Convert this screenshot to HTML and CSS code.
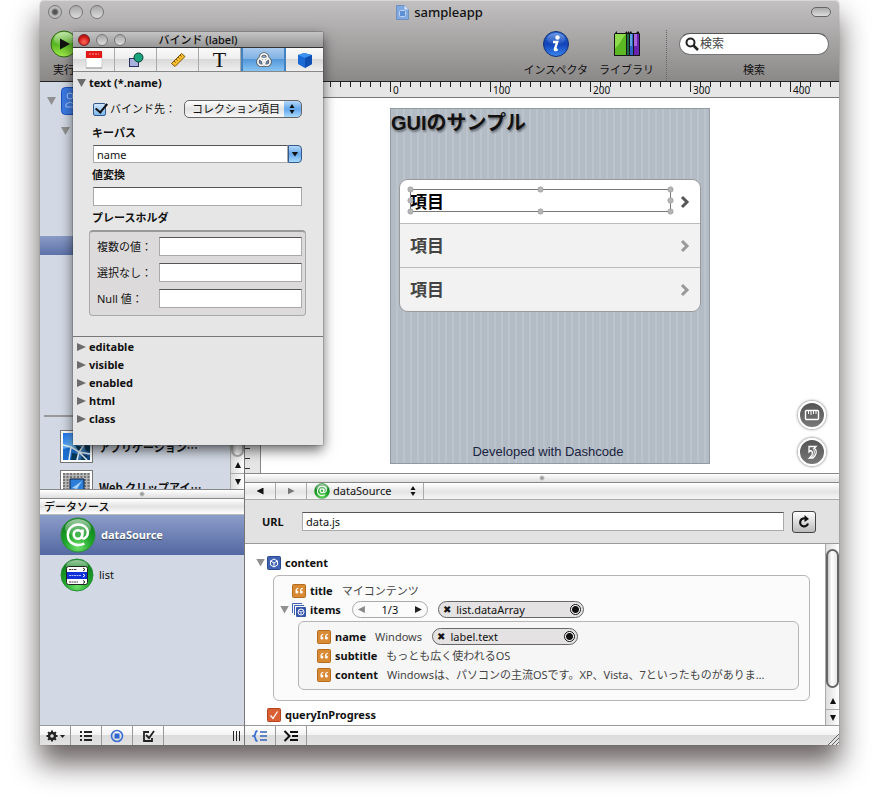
FILE: index.html
```html
<!DOCTYPE html>
<html lang="ja">
	<head>
		<meta charset="UTF-8">
		<title>sampleapp</title>
		<link rel="stylesheet" href="styles.css">
	</head>
	<body>
		<svg class="defs" aria-hidden="true">
			<defs>
				<radialGradient id="green" cx="50%" cy="85%" r="80%">
					<stop offset="0" stop-color="#6fe06a"/>
					<stop offset=".5" stop-color="#1fa52b"/>
					<stop offset="1" stop-color="#0d7a1c"/>
				</radialGradient>
				<linearGradient id="gloss" x1="0" y1="0" x2="0" y2="1">
					<stop offset="0" stop-color="#fff" stop-opacity=".6"/>
					<stop offset="1" stop-color="#fff" stop-opacity=".05"/>
				</linearGradient>
				<linearGradient id="run" x1="0" y1="0" x2="0" y2="1">
					<stop offset="0" stop-color="#6cc534"/>
					<stop offset=".5" stop-color="#57b520"/>
					<stop offset="1" stop-color="#a4f04e"/>
				</linearGradient>
				<linearGradient id="bluefill" x1="0" y1="0" x2="0" y2="1">
					<stop offset="0" stop-color="#2f6fd8"/>
					<stop offset=".5" stop-color="#1143b8"/>
					<stop offset="1" stop-color="#3a86f0"/>
				</linearGradient>
				<linearGradient id="water" x1="0" y1="0" x2="1" y2="1">
					<stop offset="0" stop-color="#1a70f0"/>
					<stop offset=".4" stop-color="#6fc0fa"/>
					<stop offset="1" stop-color="#063a80"/>
				</linearGradient>
			</defs>
			<symbol id="quote" viewBox="0 0 14 14">
				<rect x=".5" y=".5" width="13" height="13" rx="1" fill="#d98a35" stroke="#b56c1c"/>
				<path d="M6.3 4.2C4.6 4.7 3.9 5.8 4 7" fill="none" stroke="#fff" stroke-width="1.1"/>
				<path d="M10.8 4.2C9.1 4.7 8.4 5.8 8.5 7" fill="none" stroke="#fff" stroke-width="1.1"/>
				<circle cx="4.9" cy="8" r="1.5" fill="#fff"/>
				<circle cx="9.4" cy="8" r="1.5" fill="#fff"/>
			</symbol>
			<symbol id="at" viewBox="0 0 36 36">
				<circle cx="18" cy="18" r="17" fill="url(#green)" stroke="#2b8f37"/>
				<ellipse cx="18" cy="11" rx="13" ry="9" fill="url(#gloss)"/>
				<circle cx="18" cy="17.500" r="4.300" fill="none" stroke="#fff" stroke-width="2.600"/>
				<path d="M22.800 12.500l-1 7.500c0 3 6 1.500 6-4.500 0-5-4.500-8-9.500-8-6 0-10.500 4.500-10.500 10.500s4.500 10 10.500 10c2.500 0 4.500-.5 6-1.500" fill="none" stroke="#fff" stroke-width="2.400"/>
			</symbol>
			<symbol id="cube" viewBox="0 0 14 14">
				<rect x=".5" y=".5" width="13" height="13" rx="1" fill="#3f62b4" stroke="#2a478f"/>
				<path d="M7 3l3.500 2v4L7 11 3.500 9V5zM3.500 5L7 7l3.500-2M7 7v4" fill="none" stroke="#fff"/>
			</symbol>
		</svg>

		<div class="app">
			<header class="chrome">
				<div class="titlebar">
					<div class="lights">
						<button class="light light--dot" aria-label="close"></button>
						<button class="light" aria-label="minimize"></button>
						<button class="light" aria-label="zoom"></button>
					</div>
					<h1 class="app-title">
						<svg width="13" height="16" viewBox="0 0 13 16"><path d="M.5 1.500h8l4 4v10H.5z" fill="#7fa9e0" stroke="#6f8fbd"/><path d="M8.500 1.500v4h4z" fill="#dbe8fa"/><rect x="3.500" y="6.500" width="6" height="6" rx="1" fill="#5d8fd4" stroke="#bcd5f5"/></svg>
						sampleapp
					</h1>
					<button class="pill-button" aria-label="toolbar"></button>
				</div>
				<div class="toolbar">
					<button class="tool tool--run">
						<svg width="28" height="28" viewBox="0 0 28 28"><circle cx="14" cy="14" r="13" fill="url(#run)" stroke="#33671a"/><ellipse cx="14" cy="9" rx="10" ry="7" fill="url(#gloss)"/><path d="M10 8.500l10 5.500-10 5.500z" fill="#111"/></svg>
						<span>実行</span>
					</button>
					<button class="tool tool--inspector">
						<svg width="28" height="28" viewBox="0 0 28 28"><circle cx="14" cy="14" r="12.500" fill="url(#bluefill)" stroke="#143070"/><ellipse cx="14" cy="9" rx="9" ry="6" fill="url(#gloss)" opacity=".5"/><circle cx="15.500" cy="7.500" r="2.200" fill="#fff"/><path d="M11 12h4.200l-2.400 7.500c0 1 1.200.8 2.700-.5" fill="none" stroke="#fff" stroke-width="2.400"/></svg>
						<span>インスペクタ</span>
					</button>
					<button class="tool tool--library">
						<svg width="28" height="28" viewBox="0 0 28 28"><path d="M1 4l3-3v2h8l2-2v2l2-2v2l2-2 1 2h4l2-2 2 3v22H1z" fill="#151515"/><path d="M2 4h11v21H2z" fill="#5cb823"/><path d="M2 4h11C8 9 8 14 2 18z" fill="#8edb4e"/><path d="M14 4h2v21h-2z" fill="#1f6a4c"/><path d="M17 4h3v21h-3z" fill="#2f62c8"/><path d="M17 4h2v12h-2z" fill="#62a5dd"/><path d="M21 4h5v21h-5z" fill="#6a22b0"/><path d="M21 4h3v12h-3z" fill="#a866dc"/></svg>
						<span>ライブラリ</span>
					</button>
					<div class="search">
						<div class="search-box">
							<svg width="14" height="14" viewBox="0 0 14 14"><circle cx="5.500" cy="5.500" r="4" fill="none" stroke="#222" stroke-width="2"/><path d="M8.500 8.500l4.500 4.500" stroke="#222" stroke-width="2.600"/></svg>
							<input id="search" type="search" placeholder="検索">
						</div>
						<label for="search">検索</label>
					</div>
				</div>
			</header>

			<div class="columns">
				<aside class="sidebar">
					<div class="tree">
						<div class="tree-list">
							<div class="tree-row">
								<i class="tri tri--gray"></i>
								<svg width="28" height="28" viewBox="0 0 28 28"><rect x=".5" y=".5" width="27" height="27" rx="4" fill="#3c7be4" stroke="#1b4fc0"/><circle cx="9" cy="9" r="3" fill="none" stroke="#a8c9ff"/><path d="M5 20h8v-3l-4-2-4 2z" fill="none" stroke="#a8c9ff"/></svg>
							</div>
							<div class="tree-row tree-row--child"><i class="tri tri--gray"></i></div>
							<div class="tree-selected"></div>
							<hr class="tree-line">
							<div class="asset">
								<svg width="33" height="33" viewBox="0 0 33 33"><rect x=".5" y=".5" width="32" height="32" fill="#fff" stroke="#777"/><path d="M3 3h27v27H3z" fill="url(#water)"/><path d="M3 19l8-2 6 4-3 9H3z" fill="#1c6fd0"/><path d="M15 15l7 2-3 5zM24 15l6 1v6l-4-1zM12 23l6 1-2 6h-5zM22 24l6 2-3 4h-4z" fill="#093b5c"/><path d="M3 15l8 2 8 5 11 2M11 17l-2 13M19 22l-2 8M19 22l5-7M19 22l8 8" fill="none" stroke="#e8f3fa" stroke-width="1.500"/></svg>
								<span>アプリケーション…</span>
							</div>
							<div class="asset">
								<svg width="33" height="33" viewBox="0 0 33 33"><rect x=".5" y=".5" width="32" height="32" fill="#fff" stroke="#777"/><path d="M3 3h27v27H3z" fill="#b8b8b8"/><path d="M3 4h27M3 7h27M3 10h27M3 13h27M3 16h27M3 19h27" stroke="#333" stroke-dasharray="2 1.500"/><path d="M10 9h14v21H10z" fill="#2c7ed8" stroke="#124"/><path d="M12 18l10-7-5 8z" fill="#a5d0fa"/></svg>
								<span>Web クリップアイ…</span>
							</div>
						</div>
						<div class="scroll scroll--small"><i class="thumb"></i><i class="up"></i><i class="down"></i></div>
					</div>
					<div class="splitter"></div>
					<h2 class="source-head">データソース</h2>
					<ul class="sources">
						<li class="source source--on"><svg width="36" height="36"><use href="#at"/></svg>dataSource</li>
						<li class="source">
							<svg width="34" height="36" viewBox="0 0 34 36"><circle cx="17" cy="18" r="16" fill="url(#green)" stroke="#2b8f37"/><ellipse cx="17" cy="9" rx="11" ry="6" fill="url(#gloss)"/><rect x="6.500" y="9.500" width="21" height="18" rx="2" fill="#fff" stroke="#222"/><path d="M7 15h20v7H7z" fill="#1230d8"/><path d="M9 12.500h8M9 25h9" stroke="#444" stroke-dasharray="2 .5"/><path d="M9 18.500h12" stroke="#aabaff" stroke-dasharray="2 .5"/><path d="M23 11l2 1.500-2 1.500M23 23.500l2 1.500-2 1.500" fill="none" stroke="#222"/><path d="M23 17l2 1.500-2 1.500" fill="none" stroke="#fff"/></svg>
							list
						</li>
					</ul>
					<div class="bottombar">
						<button aria-label="action"><svg width="20" height="14" viewBox="0 0 20 14"><circle cx="7" cy="7" r="3" fill="none" stroke="#222" stroke-width="2.400"/><path d="M7 1.500v2M7 10.500v2M1.500 7h2M10.500 7h2M3.100 3.100l1.400 1.400M9.500 9.500l1.400 1.400M10.900 3.100L9.500 4.500M4.500 9.500l-1.400 1.400" stroke="#222" stroke-width="2"/><path d="M15 6h5l-2.500 3z" fill="#222"/></svg></button>
						<button aria-label="outline"><svg width="14" height="14" viewBox="0 0 14 14"><path d="M1 3h2M1 7h2M1 11h2M5 3h8M5 7h8M5 11h8" stroke="#222" stroke-width="2"/></svg></button>
						<button aria-label="data source"><svg width="14" height="14" viewBox="0 0 14 14"><circle cx="7" cy="7" r="5.500" fill="none" stroke="#3b6fd2" stroke-width="1.600"/><rect x="4.500" y="4.500" width="5" height="5" fill="#2f66d0"/></svg></button>
						<button aria-label="steps"><svg width="14" height="14" viewBox="0 0 14 14"><path d="M8 3H3v9h8V9" fill="none" stroke="#222" stroke-width="1.800"/><path d="M5 6l3 3 5-7" fill="none" stroke="#222" stroke-width="1.800"/></svg></button>
						<svg class="grip" width="8" height="10" viewBox="0 0 8 10"><path d="M.5 0v10M3.500 0v10M6.500 0v10" stroke="#222"/></svg>
					</div>
				</aside>

				<main class="editor">
					<div class="ruler">
						<span class="ruler-lead"></span>
						<span class="ruler-mark">0</span>
						<span class="ruler-mark">100</span>
						<span class="ruler-mark">200</span>
						<span class="ruler-mark">300</span>
						<span class="ruler-mark">400</span>
					</div>
					<div class="stage">
						<div class="side-ruler"></div>
						<div class="canvas">
							<div class="phone">
								<h2 class="phone-title">GUIのサンプル</h2>
								<ul class="items">
									<li class="item item--first">項目
										<svg width="10" height="14" viewBox="0 0 10 14"><path d="M2 2l5 5-5 5" fill="none" stroke="currentColor" stroke-width="3"/></svg>
										<svg class="selection" width="270" height="32" viewBox="0 0 270 32"><rect x="4.500" y="4.500" width="260" height="22" fill="none" stroke="#777"/><g fill="#b5b5b5" stroke="#8f8f8f" stroke-width=".5"><circle cx="4.500" cy="4.500" r="2.700"/><circle cx="134.500" cy="4.500" r="2.700"/><circle cx="264.500" cy="4.500" r="2.700"/><circle cx="4.500" cy="15.500" r="2.700"/><circle cx="264.500" cy="15.500" r="2.700"/><circle cx="4.500" cy="26.500" r="2.700"/><circle cx="134.500" cy="26.500" r="2.700"/><circle cx="264.500" cy="26.500" r="2.700"/></g></svg>
									</li>
									<li class="item">項目 <svg width="10" height="14" viewBox="0 0 10 14"><path d="M2 2l5 5-5 5" fill="none" stroke="currentColor" stroke-width="3"/></svg></li>
									<li class="item">項目 <svg width="10" height="14" viewBox="0 0 10 14"><path d="M2 2l5 5-5 5" fill="none" stroke="currentColor" stroke-width="3"/></svg></li>
								</ul>
								<p class="credit">Developed with Dashcode</p>
							</div>
							<div class="rounds">
								<button class="round" aria-label="ruler"><svg width="16" height="16" viewBox="0 0 16 16"><rect x="1.500" y="3.500" width="13" height="9" rx="1" fill="none" stroke="#fff" stroke-width="1.400"/><path d="M4.500 4v3M7 4v4M9.500 4v3M12 4v3" stroke="#fff"/></svg></button>
								<button class="round" aria-label="rotate"><svg width="16" height="16" viewBox="0 0 16 16"><path d="M5 2.500h7l-1.500 1.500c3 3 2 7-1.500 10H5.500c4-3 3.500-7 1-7.500L5 8z" fill="none" stroke="#fff" stroke-width="1.300"/><path d="M9 4c2.500 4 1 7-1.500 10" fill="none" stroke="#fff"/></svg></button>
							</div>
						</div>
					</div>
					<div class="splitter"></div>
					<nav class="navbar">
						<button class="nav-cell" aria-label="back"><i class="arrow arrow--left"></i></button>
						<button class="nav-cell" aria-label="forward"><i class="arrow arrow--right"></i></button>
						<div class="nav-select">
							<svg width="16" height="16"><use href="#at"/></svg>
							<select aria-label="data source"><option>dataSource</option></select>
							<svg class="updown" width="6" height="10" viewBox="0 0 6 10"><path d="M.5 4L3 0l2.500 4zM.5 6L3 10l2.500-4z" fill="#111"/></svg>
						</div>
					</nav>
					<div class="urlbar">
						<label for="url">URL</label>
						<input id="url" class="field" type="text" value="data.js">
						<button class="reload" aria-label="reload"><svg width="14" height="14" viewBox="0 0 14 14"><path d="M8 3.500a4 4 0 1 0 3 5" fill="none" stroke="#111" stroke-width="2.200"/><path d="M7.500 0v7L12 4z" fill="#111"/></svg></button>
					</div>
					<div class="data">
						<div class="data-tree">
							<div class="data-row data-row--top">
								<i class="tri tri--gray"></i>
								<svg width="14" height="14"><use href="#cube"/></svg>
								<b>content</b>
							</div>
							<div class="box">
								<div class="data-row data-row--box">
									<svg width="14" height="14"><use href="#quote"/></svg>
									<b>title</b><span>マイコンテンツ</span>
								</div>
								<div class="data-row data-row--items">
									<i class="tri tri--gray"></i>
									<svg width="14" height="14" viewBox="0 0 14 14"><path d="M.5 10V.5H10M2.500 12V2.500H12" fill="none" stroke="#3f62b4"/><rect x="4" y="4" width="10" height="10" rx="1" fill="#3557a8"/><circle cx="9" cy="9" r="3" fill="none" stroke="#fff"/><path d="M7 8l2 1 2-1M9 9v2" fill="none" stroke="#fff" stroke-width=".8"/></svg>
									<b>items</b>
									<div class="stepper">
										<button aria-label="previous"><i class="arrow arrow--left arrow--dim"></i></button>
										1/3
										<button aria-label="next"><i class="arrow arrow--right arrow--dark"></i></button>
									</div>
									<div class="binding"><button aria-label="remove">✖</button>list.dataArray<i class="socket"></i></div>
								</div>
								<div class="box box--inner">
									<div class="data-row">
										<svg width="14" height="14"><use href="#quote"/></svg>
										<b>name</b><span>Windows</span>
										<div class="binding"><button aria-label="remove">✖</button>label.text<i class="socket"></i></div>
									</div>
									<div class="data-row">
										<svg width="14" height="14"><use href="#quote"/></svg>
										<b>subtitle</b><span>もっとも広く使われるOS</span>
									</div>
									<div class="data-row">
										<svg width="14" height="14"><use href="#quote"/></svg>
										<b>content</b><span>Windowsは、パソコンの主流OSです。XP、Vista、7といったものがありま…</span>
									</div>
								</div>
							</div>
							<div class="data-row data-row--query">
								<svg width="14" height="14" viewBox="0 0 14 14"><rect x=".5" y=".5" width="13" height="13" rx="1" fill="#db5f35" stroke="#b3441d"/><path d="M3.500 7.500l2.500 3 4.500-7" fill="none" stroke="#fff" stroke-width="1.300"/></svg>
								<b>queryInProgress</b>
							</div>
						</div>
						<div class="scroll"><i class="thumb"></i><i class="up"></i><i class="down"></i></div>
					</div>
					<div class="bottombar">
						<button aria-label="data outline"><svg width="16" height="14" viewBox="0 0 16 14"><path d="M5.500 2C2 2 5 6 1.500 7 5 8 2 12 5.500 12" fill="none" stroke="#3b6fd2" stroke-width="1.800"/><path d="M8 3h7M8 7h7M8 11h7" stroke="#3464b8" stroke-width="1.600"/></svg></button>
						<button aria-label="source code"><svg width="16" height="14" viewBox="0 0 16 14"><path d="M1.500 2l5 5-5 5" fill="none" stroke="#111" stroke-width="2"/><path d="M7 3h8M9 7h6M7 11h8" stroke="#111" stroke-width="2"/></svg></button>
						<svg class="resize" width="12" height="12" viewBox="0 0 12 12"><path d="M1 12L12 1M5 12l7-7M9 12l3-3" stroke="#666"/></svg>
					</div>
				</main>
			</div>
		</div>

		<section class="panel">
			<header class="panel-title">
				<div class="lights lights--small">
					<button class="light light--red" aria-label="close"></button>
					<button class="light" aria-label="minimize"></button>
					<button class="light" aria-label="zoom"></button>
				</div>
				<h2>バインド (label)</h2>
			</header>
			<div class="tabs">
				<button class="tab" aria-label="attributes"><svg width="18" height="18" viewBox="0 0 18 18"><path d="M1 1h16v16H1z" fill="#fff" stroke="#ccc"/><path d="M1 0h16v7H1z" fill="#e31818"/><path d="M4 3h10" stroke="#ff9b9b" stroke-dasharray="2 1"/><path d="M1 17h16" stroke="#999"/></svg></button>
				<button class="tab" aria-label="fill and stroke"><svg width="16" height="16" viewBox="0 0 16 16"><rect x="1.500" y="6.500" width="9" height="8" fill="#a9b2dc" stroke="#2b3260"/><circle cx="10.500" cy="5.500" r="4.500" fill="#18a47d" stroke="#0a4030"/></svg></button>
				<button class="tab" aria-label="metrics"><svg width="16" height="16" viewBox="0 0 16 16"><path d="M1.500 11.500l10-10 3.500 3-10 10z" fill="#f4bd2c" stroke="#805608"/><path d="M4 9l1.500 1.500M6 7l1.500 1.500M8 5l1.500 1.500M10 3l1.500 1.500" stroke="#7c5208"/></svg></button>
				<button class="tab tab--text" aria-label="text">T</button>
				<button class="tab tab--on" aria-label="bindings"><svg width="16" height="16" viewBox="0 0 16 16"><g fill="none" stroke="#555" stroke-width="3.400"><circle cx="8" cy="5.500" r="3.600"/><circle cx="5.500" cy="9.800" r="3.600"/><circle cx="10.500" cy="9.800" r="3.600"/></g><g fill="none" stroke="#f4f4f4" stroke-width="1.800"><circle cx="8" cy="5.500" r="3.600"/><circle cx="5.500" cy="9.800" r="3.600"/><circle cx="10.500" cy="9.800" r="3.600"/></g></svg></button>
				<button class="tab" aria-label="behaviors"><svg width="16" height="18" viewBox="0 0 16 18"><path d="M1 4l6-2 8 2v9l-7 4-7-4z" fill="#1a69d4"/><path d="M1 4l7 3 7-3-8-2z" fill="#3b93ee"/><path d="M8 7l7-3v9l-7 4z" fill="#0f4fb4"/></svg></button>
			</div>
			<div class="panel-body">
				<h3 class="disclosure"><i class="tri"></i>text (*.name)</h3>
				<div class="form">
					<div class="bind-row">
						<input id="bind" class="check" type="checkbox" checked>
						<label for="bind">バインド先：</label>
						<div class="popup">
							<select aria-label="バインド先"><option>コレクション項目</option></select>
							<svg class="updown" width="6" height="10" viewBox="0 0 6 10"><path d="M.5 4L3 0l2.500 4zM.5 6L3 10l2.500-4z" fill="#111"/></svg>
						</div>
					</div>
					<label class="caption" for="keypath">キーパス</label>
					<div class="combo">
						<input id="keypath" class="field" type="text" value="name">
						<button aria-label="open"><i class="arrow arrow--down"></i></button>
					</div>
					<label class="caption" for="transform">値変換</label>
					<input id="transform" class="field" type="text">
					<div class="caption">プレースホルダ</div>
					<div class="group">
						<label for="many">複数の値：</label><input id="many" class="field" type="text">
						<label for="none">選択なし：</label><input id="none" class="field" type="text">
						<label for="null">Null 値：</label><input id="null" class="field" type="text">
					</div>
				</div>
				<div class="closed">
					<h3 class="disclosure"><i class="tri tri--shut"></i>editable</h3>
					<h3 class="disclosure"><i class="tri tri--shut"></i>visible</h3>
					<h3 class="disclosure"><i class="tri tri--shut"></i>enabled</h3>
					<h3 class="disclosure"><i class="tri tri--shut"></i>html</h3>
					<h3 class="disclosure"><i class="tri tri--shut"></i>class</h3>
				</div>
			</div>
		</section>
	</body>
</html>
```
FILE: styles.css
```css
* {
	box-sizing: border-box;
}
body {
	margin: 0;
	padding: 0 40px 55px 40px;
	min-height: 100vh;
	display: flex;
	position: relative;
	background: #fff;
	color: #111;
	font: 11px/16px "Noto Sans", "Noto Sans CJK JP", sans-serif;
}
h1, h2, h3, p, ul {
	margin: 0;
	padding: 0;
	font-size: 11px;
	list-style: none;
}
button, input, select {
	margin: 0;
	padding: 0;
	border: 0;
	background: none;
	color: inherit;
	font: inherit;
	appearance: none;
	outline: 0;
}
button {
	display: flex;
	align-items: center;
	justify-content: center;
}
svg {
	display: block;
	flex: none;
}
.defs {
	position: absolute;
	width: 0;
	height: 0;
}

/* main window */
.app {
	flex: 1;
	min-width: 0;
	display: flex;
	flex-direction: column;
	border-radius: 5px 5px 0 0;
	box-shadow: 0 0 1px #444, 0 18px 28px 1px rgba(30, 20, 20, .66);
}
.chrome {
	height: 82px;
	border-top: 1px solid #d8d8d8;
	border-bottom: 1px solid #222;
	border-radius: 5px 5px 0 0;
	background: linear-gradient(#c2c0c0, #8b8888);
}
.titlebar {
	height: 22px;
	padding: 0 8px;
	display: grid;
	grid-template-columns: 1fr auto 1fr;
	align-items: center;
}
.lights {
	display: flex;
	gap: 7px;
}
.light {
	width: 14px;
	height: 14px;
	border: 1px solid #777;
	border-radius: 50%;
	background: linear-gradient(#a6a6a6, #dcdcdc);
}
.light--dot {
	background: radial-gradient(circle, #555 0 2px, #bbb 4px);
}
.app-title {
	display: flex;
	align-items: center;
	gap: 5px;
	font-size: 13px;
	font-weight: 500;
}
.pill-button {
	justify-self: end;
	width: 20px;
	height: 10px;
	border: 1px solid #666;
	border-radius: 5px;
	background: linear-gradient(#aaa, #ddd);
}
.toolbar {
	height: 58px;
	padding: 7px 10px 0 10px;
	display: flex;
}
.tool {
	flex-direction: column;
	justify-content: flex-start;
	gap: 4px;
	white-space: nowrap;
}
.tool--run {
	margin-right: auto;
}
.tool--library {
	margin-left: 11px;
	padding-right: 12px;
	border-right: 1px dotted #666;
}
.search {
	width: 150px;
	margin-left: 12px;
	padding-top: 3px;
	display: flex;
	flex-direction: column;
	align-items: center;
	gap: 7px;
}
.search-box {
	width: 100%;
	height: 22px;
	padding: 0 5px;
	display: flex;
	align-items: center;
	gap: 1px;
	border: 1px solid #777;
	border-top-color: #555;
	border-radius: 11px;
	background: #fff;
}
.search-box input {
	flex: 1;
	min-width: 0;
	font-size: 12px;
}
.search-box input::placeholder {
	color: #444;
}
.columns {
	flex: 1;
	display: grid;
	grid-template-columns: 205px 1fr;
}

/* left side */
.sidebar {
	min-width: 0;
	display: flex;
	flex-direction: column;
	border-right: 1px solid #777;
	background: #d2d9e4;
}
.tree {
	height: 407px;
	display: flex;
	overflow: hidden;
}
.tree-list {
	flex: 1;
	min-width: 0;
}
.tree-row {
	height: 38px;
	padding-left: 7px;
	display: flex;
	align-items: center;
	gap: 5px;
}
.tree-row--child {
	height: 22px;
	padding-left: 21px;
}
.tree-selected {
	height: 19px;
	margin-top: 94px;
	background: linear-gradient(#8a9bc6, #5d72a9);
}
.tree-line {
	height: 2px;
	margin: 160px 4px 13px;
	border: 0;
	background: #999;
}
.asset {
	height: 33px;
	margin-bottom: 7px;
	padding-left: 20px;
	display: flex;
	align-items: center;
	gap: 6px;
	font-family: "Noto Sans CJK JP", sans-serif;
	font-weight: bold;
	white-space: nowrap;
}
.splitter {
	height: 10px;
	border: 1px solid #888;
	border-width: 1px 0;
	background: radial-gradient(circle, #999 0 1px, transparent 3px), linear-gradient(#fff, #dedede);
}
.source-head {
	height: 16px;
	padding-left: 4px;
	border-bottom: 1px solid #bbb;
	background: linear-gradient(#fff, #e3e3e3 50%, #fff);
	line-height: 15px;
	font-weight: 500;
}
.sources {
	flex: 1;
}
.source {
	height: 40px;
	padding-left: 20px;
	display: flex;
	align-items: center;
	gap: 5px;
}
.source--on {
	background: linear-gradient(#8c9dc9, #5468a2);
	color: #fff;
	font-weight: bold;
	text-shadow: 0 1px 1px #345;
}
.bottombar {
	height: 20px;
	display: flex;
	align-items: center;
	border-top: 1px solid #999;
	background: linear-gradient(#fff, #f2f2f2 50%, #dcdcdc 50%, #e2e2e2);
}
.bottombar button {
	width: 31px;
	height: 100%;
	border-right: 1px solid #999;
}
.grip {
	margin-left: auto;
	margin-right: 3px;
}
.resize {
	margin-left: auto;
	align-self: flex-end;
}

/* scroll bars */
.scroll {
	width: 14px;
	display: flex;
	flex-direction: column;
	align-items: center;
	border-left: 1px solid #aaa;
	background: linear-gradient(to right, #ddd, #fff);
}
.scroll .thumb {
	flex: 1;
	width: 13px;
	margin: 5px 0;
	border: 2px solid #666;
	border-radius: 7px;
	background: linear-gradient(to right, #c8c8c8, #fff 40%, #e8e8e8);
}
.scroll--small .thumb {
	margin: 0;
	border-color: #aaa;
}
.scroll .up, .scroll .down {
	width: 100%;
	height: 16px;
	display: flex;
	align-items: center;
	justify-content: center;
}
.scroll .down {
	border-top: 1px solid #aaa;
}
.up::before, .down::before {
	content: "";
	border: solid transparent;
	border-width: 0 3px 6px;
	border-bottom-color: #111;
}
.down::before {
	border-width: 6px 3px 0;
	border-top-color: #111;
}

/* triangles */
.tri {
	flex: none;
	width: 9px;
	height: 8px;
	background: #6b6b6b;
	clip-path: polygon(0 0, 100% 0, 50% 100%);
}
.tri--gray {
	background: #909090;
}
.tri--shut {
	clip-path: polygon(0 0, 100% 50%, 0 100%);
}
.arrow {
	width: 7px;
	height: 7px;
	background: #111;
}
.arrow--left {
	clip-path: polygon(100% 0, 100% 100%, 0 50%);
}
.arrow--right {
	background: #777;
	clip-path: polygon(0 0, 100% 50%, 0 100%);
}
.arrow--down {
	height: 5px;
	clip-path: polygon(0 0, 100% 0, 50% 100%);
}
.arrow--dim {
	background: #888;
}
.arrow--dark {
	background: #222;
}

/* canvas */
.editor {
	min-width: 0;
	display: flex;
	flex-direction: column;
	background: #fff;
}
.ruler {
	height: 16px;
	display: flex;
	overflow: hidden;
	border-bottom: 1px solid #777;
	background: #e6e6e6;
}
.ruler-lead, .ruler-mark {
	flex: 0 0 100px;
	background: linear-gradient(to right, #222 1px, transparent 1px) 0 0 / 10px 5px repeat-x;
}
.ruler-lead {
	flex-basis: calc(50% - 152px);
	background-position: right top;
}
.ruler-mark {
	padding-left: 3px;
	background: linear-gradient(#222, #222) 0 0 / 1px 10px no-repeat, linear-gradient(to right, #222 1px, transparent 1px) 0 0 / 10px 5px repeat-x;
	font-size: 10px;
	line-height: 17px;
}
.stage {
	display: flex;
}
.side-ruler {
	width: 16px;
	border-right: 1px solid #888;
	background: linear-gradient(#333 1px, transparent 1px) 0 0 / 5px 10px repeat-y #e6e6e6;
}
.canvas {
	flex: 1;
	position: relative;
	padding: 10px 0 9px;
	display: flex;
	justify-content: center;
}
.phone {
	width: 320px;
	min-height: 356px;
	display: flex;
	flex-direction: column;
	border: 1px solid #949aa3;
	background: repeating-linear-gradient(to right, #b3bbc5 0 5px, #bbc3cc 5px 7px);
}
.phone-title {
	font: bold 20px/28px "Liberation Sans", "Noto Sans CJK JP", sans-serif;
	text-shadow: 1px 2px 2px rgba(0, 0, 0, .4);
}
.items {
	margin: 42px 8px 0;
	border: 1px solid #999;
	border-radius: 9px;
	overflow: hidden;
}
.item {
	position: relative;
	height: 44px;
	padding: 0 10px;
	display: flex;
	align-items: center;
	justify-content: space-between;
	background: #f2f2f2;
	color: #444;
	font-size: 17px;
	font-weight: bold;
	border-bottom: 1px solid #bbb;
}
.item svg {
	color: #999;
}
.item:last-child {
	height: 43px;
	border-bottom: 0;
}
.item--first {
	background: #fff;
	color: #000;
}
.item--first svg {
	color: #555;
}
.item .selection {
	position: absolute;
	top: 5px;
	left: 6px;
}
.credit {
	margin-top: auto;
	padding: 0 4px 3px 0;
	text-align: center;
	color: #1a2440;
	font: 13px/17px "Liberation Sans", sans-serif;
}
.rounds {
	position: absolute;
	right: 13px;
	bottom: 7px;
	display: grid;
	gap: 9px;
}
.round {
	width: 28px;
	height: 28px;
	border: 2px solid #fff;
	border-radius: 50%;
	background: linear-gradient(#555, #777);
	box-shadow: 0 0 3px #555;
}

/* data source editor */
.navbar {
	height: 17px;
	display: flex;
	border-bottom: 1px solid #aaa;
	background: linear-gradient(#fff, #e4e4e4 55%, #f6f6f6);
}
.nav-cell {
	width: 31px;
	border-right: 1px solid #aaa;
}
.nav-select {
	width: 117px;
	padding: 0 7px;
	display: flex;
	align-items: center;
	gap: 3px;
	border-right: 1px solid #aaa;
}
.nav-select select {
	flex: 1;
	min-width: 0;
}
.urlbar {
	height: 44px;
	padding: 0 23px 0 17px;
	display: flex;
	align-items: center;
	gap: 8px;
	border-bottom: 1px solid #999;
	background: #e3e2e2;
}
.urlbar label {
	width: 32px;
	font-weight: bold;
}
.field {
	width: 100%;
	min-width: 0;
	height: 19px;
	padding: 0 3px;
	display: block;
	border: 1px solid #aaa;
	border-top-color: #555;
	background: #fff;
}
.urlbar .field {
	flex: 1;
}
.reload {
	width: 24px;
	height: 22px;
	border: 1px solid #444;
	border-radius: 3px;
	background: linear-gradient(#fff, #bbb);
}
.data {
	flex: 1;
	display: flex;
}
.data-tree {
	flex: 1;
	min-width: 0;
	padding: 9px 15px 0 11px;
}
.data-row {
	height: 19px;
	display: flex;
	align-items: center;
	gap: 4px;
	white-space: nowrap;
}
.data-row--top {
	gap: 2px;
}
.data-row--top b {
	margin-left: 2px;
}
.data-row span {
	margin-left: 5px;
	color: #444;
}
.box {
	margin: 3px 0 0 17px;
	padding: 5px 10px 10px 6px;
	border: 1px solid #b5b5b5;
	border-radius: 6px;
	background: #fbfbfb;
}
.box--inner {
	margin: 2px 0 0 18px;
	padding: 5px 18px;
	background: #f6f6f6;
}
.data-row--box {
	padding-left: 12px;
}
.data-row--items svg {
	margin-left: -1px;
}
.data-row--query {
	padding-left: 11px;
	margin-top: 4px;
}
.stepper {
	width: 76px;
	height: 17px;
	margin-left: 7px;
	padding: 0 5px;
	display: flex;
	align-items: center;
	justify-content: space-between;
	border: 1px solid #aaa;
	border-radius: 9px;
	font-size: 11px;
}
.binding {
	width: 146px;
	height: 17px;
	margin-left: 6px;
	padding: 0 2px 0 4px;
	display: flex;
	align-items: center;
	gap: 5px;
	border: 1px solid #666;
	border-radius: 9px;
	background: #e4e2e2;
}
.binding button {
	font: 10px/12px "DejaVu Sans", sans-serif;
}
.socket {
	width: 11px;
	height: 11px;
	margin-left: auto;
	border: 1px solid #111;
	border-radius: 50%;
	background: radial-gradient(circle, #111 0 3px, #fff 4px);
}

/* floating inspector */
.panel {
	position: absolute;
	top: 32px;
	left: 73px;
	width: 250px;
	min-height: 413px;
	background: #e6e6e6;
	box-shadow: 0 0 1px #222, 0 5px 12px rgba(0, 0, 0, .6);
}
.panel-title {
	height: 16px;
	padding: 0 5px;
	display: grid;
	grid-template-columns: 1fr auto 1fr;
	align-items: center;
	border-bottom: 1px solid #333;
	background: linear-gradient(#c4c4c4, #979797);
}
.panel-title h2 {
	font-weight: 500;
	line-height: 15px;
}
.lights--small {
	gap: 6px;
}
.lights--small .light {
	width: 12px;
	height: 12px;
}
.lights .light--red {
	border-color: #722;
	background: radial-gradient(circle at 50% 70%, #ff6a5a, #d01818 60%, #8a1010);
}
.tabs {
	height: 24px;
	display: grid;
	grid-template-columns: repeat(4, 42px) 45px 1fr;
	border-bottom: 1px solid #888;
	background: linear-gradient(#fafafa, #ededed 50%, #d9d9d9 50%, #efefef);
}
.tab {
	border-right: 1px solid #aaa;
}
.tab:last-child {
	border-right: 0;
}
.tab--text {
	font: 22px/22px "Liberation Serif", serif;
}
.tab--on {
	border: 2px solid #4182c0;
	border-width: 0 2px;
	background: linear-gradient(#a9cbee, #7fb0e2 50%, #5598da 50%, #87c4f2);
}
.panel-body {
	padding-top: 2px;
}
.disclosure {
	height: 18px;
	padding-left: 4px;
	display: flex;
	align-items: center;
	gap: 3px;
}
.form {
	height: 244px;
	padding: 7px 21px 0 20px;
}
.bind-row {
	height: 20px;
	margin-bottom: 2px;
	display: flex;
	align-items: center;
	gap: 4px;
	white-space: nowrap;
}
.check {
	width: 13px;
	height: 13px;
	border: 1px solid #345a8c;
	border-radius: 2px;
	background: linear-gradient(#cfe5fb, #7db7ee);
}
.check:checked::before {
	content: "";
	display: block;
	width: 5px;
	height: 10px;
	margin: -3px 0 0 4px;
	border: solid #111;
	border-width: 0 2px 2px 0;
	transform: rotate(40deg);
}
.popup {
	width: 118px;
	height: 18px;
	margin-left: auto;
	padding: 0 6px 0 7px;
	display: flex;
	align-items: center;
	border: 1px solid #666;
	border-radius: 5px;
	background: linear-gradient(#b5d8fa, #64a6ec 50%, #a6dafd) right / 17px 100% no-repeat, linear-gradient(#fff, #e2e2e2 50%, #f8f8f8);
}
.popup select {
	flex: 1;
	min-width: 0;
}
.caption {
	display: block;
	height: 24px;
	margin-left: -1px;
	line-height: 24px;
	font-weight: bold;
}
.combo {
	display: flex;
	height: 18px;
}
.combo .field {
	height: 18px;
}
.combo button {
	width: 15px;
	border: 1px solid #345a8c;
	border-radius: 0 4px 4px 0;
	background: linear-gradient(#b5d8fa, #64a6ec 50%, #a6dafd);
}
.group {
	margin: 0 -4px;
	padding: 5px 3px 7px 7px;
	display: grid;
	grid-template-columns: 62px 1fr;
	row-gap: 7px;
	align-items: center;
	border: 1px solid #aaa;
	border-top: 2px solid #999;
	border-radius: 4px;
	background: #dcdada;
	white-space: nowrap;
}
.closed {
	padding-top: 1px;
	border-top: 1px solid #777;
}
```
